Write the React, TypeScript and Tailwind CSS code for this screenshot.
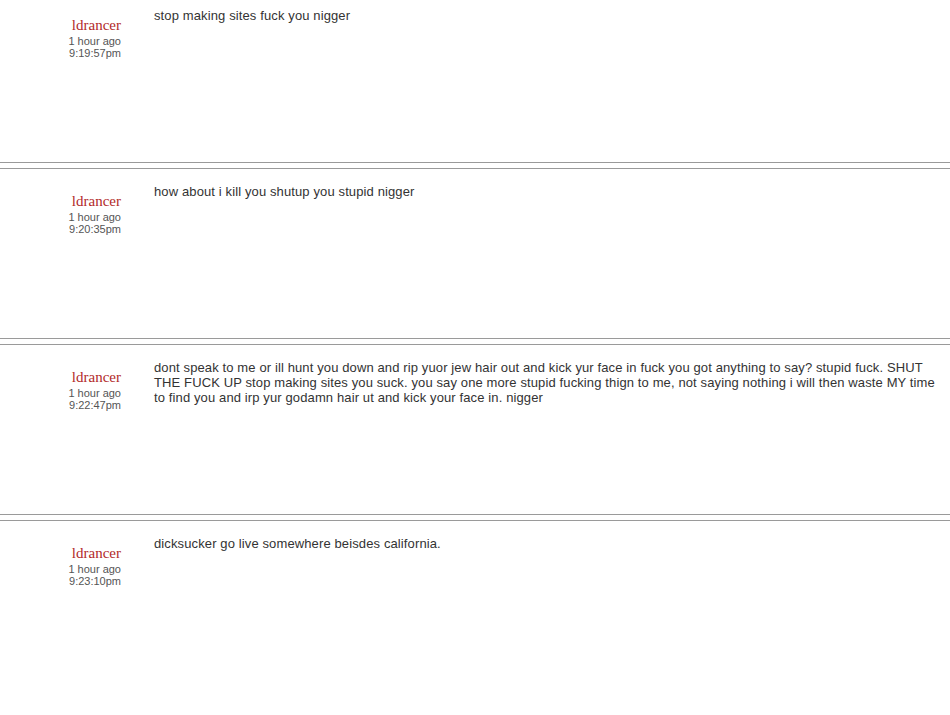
const posts = [
  {
    user: 'ldrancer',
    ago: '1 hour ago',
    time: '9:19:57pm',
    text: 'stop making sites fuck you nigger',
  },
  {
    user: 'ldrancer',
    ago: '1 hour ago',
    time: '9:20:35pm',
    text: 'how about i kill you shutup you stupid nigger',
  },
  {
    user: 'ldrancer',
    ago: '1 hour ago',
    time: '9:22:47pm',
    text: 'dont speak to me or ill hunt you down and rip yuor jew hair out and kick yur face in fuck you got anything to say? stupid fuck. SHUT THE FUCK UP stop making sites you suck. you say one more stupid fucking thign to me, not saying nothing i will then waste MY time to find you and irp yur godamn hair ut and kick your face in. nigger',
  },
  {
    user: 'ldrancer',
    ago: '1 hour ago',
    time: '9:23:10pm',
    text: 'dicksucker go live somewhere beisdes california.',
  },
]

const App = () => {
  return (
    <div className="min-h-[715px] bg-white overflow-hidden">
      {/* page is scrolled a few px down */}
      <div className="-mt-[8px]">
        {posts.map((post, i) => (
          <div
            key={i}
            className={`border-t border-[#9a9a9a] mb-[5px] ${i < posts.length - 1 ? 'border-b' : ''}`}
          >
            <div className="flex h-[169px]">
              <div className="w-[121px] shrink-0 text-right pt-[22px]">
                <div className="text-[15px] leading-[20px] text-[#b22a2a] font-['Liberation_Serif',serif]">
                  {post.user}
                </div>
                <div className="text-[11px] leading-[12px] text-[#555] font-['Liberation_Sans',Arial,sans-serif]">
                  <div>{post.ago}</div>
                  <div>{post.time}</div>
                </div>
              </div>
              <div className="flex-1 ml-[33px] pr-[6px] pt-[15px] text-[13px] leading-[15px] tracking-[0.12px] text-[#333] font-['Liberation_Sans',Arial,sans-serif]">
                {post.text}
              </div>
            </div>
          </div>
        ))}
      </div>
    </div>
  )
}

export default App
